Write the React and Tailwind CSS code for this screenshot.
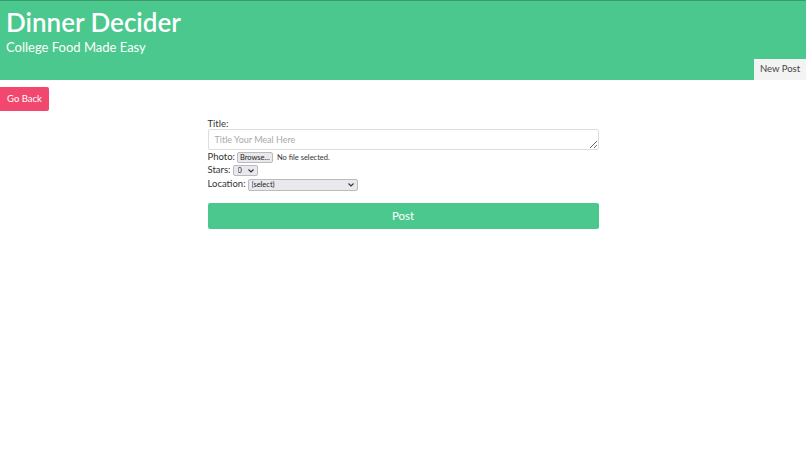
import React from "react";

const Chevron = () => (
  <svg width="6" height="4" viewBox="0 0 6 4" className="pointer-events-none absolute right-[4px] top-1/2 -translate-y-1/2">
    <path d="M0.5 0.5 L3 3 L5.5 0.5" fill="none" stroke="#333" strokeWidth="1.1" />
  </svg>
);

const App = () => {
  return (
    <div className="min-h-[451px] bg-white font-['Lato','Open_Sans',sans-serif] text-[#333]">
      {/* Header */}
      <header className="relative h-[80px] border-t border-[#3a9a6c] bg-[#4bc88d] px-[6px] text-white">
        <h1 className="pt-[4px] text-[26px] font-semibold leading-[34px]">Dinner Decider</h1>
        <p className="text-[13px] leading-[16px]">College Food Made Easy</p>
        <button className="absolute right-0 bottom-0 h-[21px] w-[52px] bg-[#f3f3f3] text-[9.5px] text-[#444]">
          New Post
        </button>
      </header>

      <div className="flex pt-[7px]">
        <button className="h-[24px] w-[49px] rounded-r-[2px] bg-[#f2476e] text-[9.5px] text-white">
          Go Back
        </button>
      </div>

      {/* Form */}
      <div className="mx-auto mt-[7px] flex w-[391px] flex-col text-[9.5px]">
        <label className="leading-[11px]">Title:</label>
        <textarea
          placeholder="Title Your Meal Here"
          className="block h-[21px] w-full resize-y rounded-[2px] border border-[#ddd] px-[6px] py-[3px] text-[9px] leading-[13px] placeholder-[#aaa] outline-none"
        />
        <div className="mt-[1px] flex h-[13px] items-center gap-[2px]">
          <span>Photo:</span>
          <span className="flex h-[11px] w-[36px] items-center justify-center rounded-[2px] border border-[#bbb] bg-[#e9e9ed] text-[7.5px] leading-[9px] text-[#222]">
            Browse...
          </span>
          <span className="ml-[2px] text-[7.5px]">No file selected.</span>
        </div>
        <div className="flex h-[13px] items-center gap-[2px]">
          <span>Stars:</span>
          <div className="relative">
            <select className="block h-[11px] w-[25px] appearance-none rounded-[2px] border border-[#bbb] bg-[#e9e9ed] pl-[4px] text-[7.5px] leading-[9px] text-[#222]">
              <option>0</option>
            </select>
            <Chevron />
          </div>
        </div>
        <div className="mt-[1px] flex h-[13px] items-center gap-[2px]">
          <span>Location:</span>
          <div className="relative">
            <select className="block h-[12px] w-[110px] appearance-none rounded-[2px] border border-[#bbb] bg-[#e9e9ed] pl-[3px] text-[7.5px] leading-[10px] text-[#222]">
              <option>(select)</option>
            </select>
            <Chevron />
          </div>
        </div>
        <button className="mt-[12px] h-[26px] w-full rounded-[2px] bg-[#4bc88d] text-[11.5px] text-white">
          Post
        </button>
      </div>
    </div>
  );
};

export default App;
